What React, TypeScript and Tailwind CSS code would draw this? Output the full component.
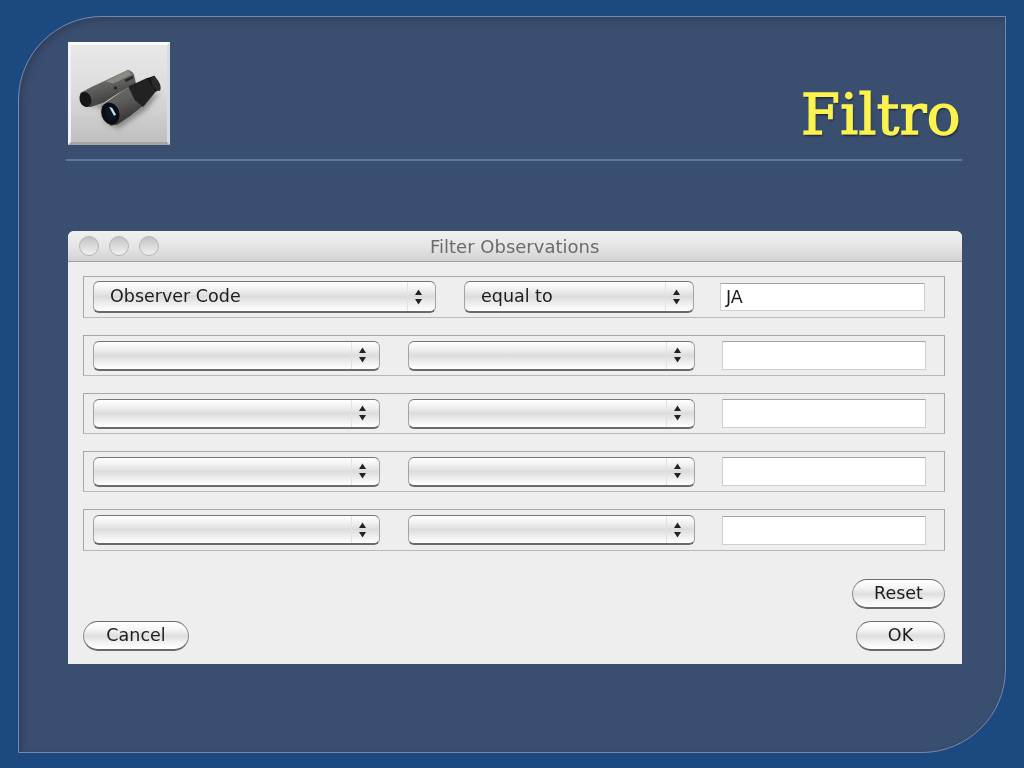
import type { ReactNode } from "react";

const uiFont = "font-['DejaVu_Sans',sans-serif]";

function Arrows() {
  return (
    <svg width="9" height="18" viewBox="0 0 9 18" className="block">
      <path d="M4.5 1.5 L8 7 L1 7 Z" fill="#222" />
      <path d="M1 11 L8 11 L4.5 16.5 Z" fill="#222" />
    </svg>
  );
}

function Select({ width, height, label }: { width: string; height: string; label?: string }) {
  return (
    <div
      className={`${width} ${height} flex shrink-0 items-stretch rounded-[6px] border border-[#a2a2a2] border-t-[#757575] border-b-2 border-b-[#6a6a6a] bg-[linear-gradient(180deg,#ffffff_0%,#f1f1f1_25%,#dcdcdc_50%,#ececec_72%,#ffffff_100%)]`}
    >
      <div className="flex min-w-0 flex-1 items-center pl-[16px] pt-[1px] text-[17.5px] leading-none text-[#1c1c1c]">{label}</div>
      <div className="flex w-[28px] items-center justify-center border-l border-[#e2e2e2] pr-[6px]">
        <Arrows />
      </div>
    </div>
  );
}

function Field({ value, width, height }: { value?: string; width: string; height: string }) {
  return (
    <div
      className={`${width} ${height} flex shrink-0 items-center border border-[#cfcfcf] border-t-[#a4a4a4] bg-white pl-[5px] pt-[1px] text-[17.5px] leading-none text-[#1c1c1c]`}
    >
      {value}
    </div>
  );
}

function Row({ height, children }: { height: string; children: ReactNode }) {
  return <div className={`${height} flex items-center border border-[#a8a8a8] border-b-[#b8b8b8] pl-[9px]`}>{children}</div>;
}

function EmptyRow({ height }: { height: string }) {
  return (
    <Row height={height}>
      <Select width="w-[287px]" height="h-[30px]" />
      <div className="w-[28px] shrink-0" />
      <Select width="w-[287px]" height="h-[30px]" />
      <div className="w-[27px] shrink-0" />
      <Field width="w-[204px]" height="h-[29px]" />
    </Row>
  );
}

function MacButton({ width, children }: { width: string; children: ReactNode }) {
  return (
    <div
      className={`${width} flex h-[30px] items-center justify-center rounded-full border border-[#8c8c8c] border-t-[#6e6e6e] border-b-2 border-b-[#6a6a6a] bg-[linear-gradient(180deg,#ffffff_0%,#f4f4f4_30%,#dedede_52%,#f2f2f2_75%,#ffffff_100%)] text-[17.5px] leading-none text-[#1c1c1c]`}
    >
      {children}
    </div>
  );
}

function Binoculars() {
  return (
    <svg viewBox="27 21 300 301" className="block h-full w-full">
      <defs>
        <linearGradient id="body" x1="0" y1="0" x2="0.4" y2="1">
          <stop offset="0" stopColor="#747470" />
          <stop offset="0.55" stopColor="#585856" />
          <stop offset="1" stopColor="#303030" />
        </linearGradient>
        <linearGradient id="rear" x1="0" y1="0" x2="0.4" y2="1">
          <stop offset="0" stopColor="#858581" />
          <stop offset="0.5" stopColor="#626260" />
          <stop offset="1" stopColor="#3a3a3a" />
        </linearGradient>
        <filter id="soft" x="-30%" y="-30%" width="160%" height="160%">
          <feGaussianBlur stdDeviation="9" />
        </filter>
        <filter id="edge">
          <feGaussianBlur stdDeviation="1.2" />
        </filter>
      </defs>
      <path d="M60 205 L120 215 L135 262 L175 282 L262 222 L305 168 L240 185 L120 200 Z" fill="#5c5c5c" opacity="0.6" filter="url(#soft)" />
      <g filter="url(#edge)">
        {/* back barrel */}
        <path d="M56 170 Q90 150 128 134 L205 97 Q218 100 224 112 L230 140 L172 172 L130 200 L88 214 Q70 214 58 195 Z" fill="url(#rear)" />
        <path d="M134 134 L205 99 L216 112 L160 140 Z" fill="#8a8a84" />
        <path d="M194 128 L220 116 L222 124 L198 136 Z" fill="#2a2a2a" />
        <ellipse cx="166" cy="154" rx="5" ry="5" fill="#242424" />
        <ellipse cx="72" cy="190" rx="18" ry="24" transform="rotate(-18 72 190)" fill="#121212" />
        {/* front barrel */}
        <path d="M122 212 Q165 176 208 152 L240 190 L252 210 Q215 242 172 268 L150 272 Z" fill="url(#body)" />
        <path d="M206 150 L266 122 L298 158 L252 214 L226 192 Z" fill="#202020" />
        <path d="M264 124 L288 116 L306 146 L294 166 Z" fill="#121212" />
        <ellipse cx="292" cy="141" rx="11" ry="25" transform="rotate(-28 292 141)" fill="#2a2a2a" />
        <ellipse cx="150" cy="234" rx="28" ry="35" transform="rotate(-18 150 234)" fill="#111111" />
        <ellipse cx="151" cy="234" rx="17" ry="24" transform="rotate(-18 151 234)" fill="#08121e" />
        <path d="M146 213 L156 217 L168 238 L161 241 Z" fill="#bfe2f0" />
      </g>
    </svg>
  );
}

export default function App() {
  return (
    <div className={`h-[768px] w-[1024px] overflow-hidden bg-[#1c4a80] pl-[18px] pt-[16px] blur-[0.35px] ${uiFont}`}>
      <div className="h-[737px] w-[988px] rounded-tl-[84px] rounded-br-[84px] border border-[#7389ad] bg-[#3a4e70] pl-[49px] pr-[43px] pt-[25px] shadow-[inset_3px_3px_6px_rgba(30,40,60,0.35)]">
        {/* header */}
        <div className="flex h-[103px] items-start justify-between">
          <div className="h-[103px] w-[102px] border-[3px] border-t-[#fbfbfb] border-l-[#f2f2f2] border-r-[#d9dbe2] border-b-[#a5a5a5] bg-[linear-gradient(180deg,#e8e8e8_0%,#dddddd_45%,#bfbfbf_100%)]">
            <Binoculars />
          </div>
          <div className="mt-[35px] pr-[1px] font-['DejaVu_Serif',serif] text-[56px] leading-[76px] tracking-[0.4px] text-[#fbf34e] [-webkit-text-stroke:1.4px_#fbf34e] [text-shadow:1px_2px_2px_#1b2438]">
            Filtro
          </div>
        </div>
        <div className="-ml-[2px] mt-[14px] h-[2px] w-[896px] bg-[#5c7aa6]" />

        {/* dialog */}
        <div className="mt-[70px] h-[433px] w-[894px] overflow-hidden rounded-t-[6px] bg-[#eeeeee]">
          <div className="flex h-[31px] items-center border-b border-[#a4a4a4] bg-[linear-gradient(180deg,#f0f0f0_0%,#e4e4e4_55%,#d2d2d2_100%)] pl-[11px]">
            <div className="flex gap-[10px]">
              <span className="h-[20px] w-[20px] rounded-full border border-[#b4b4b4] bg-[linear-gradient(180deg,#c2c2c2_0%,#dcdcdc_55%,#f0f0f0_100%)]" />
              <span className="h-[20px] w-[20px] rounded-full border border-[#b4b4b4] bg-[linear-gradient(180deg,#c2c2c2_0%,#dcdcdc_55%,#f0f0f0_100%)]" />
              <span className="h-[20px] w-[20px] rounded-full border border-[#b4b4b4] bg-[linear-gradient(180deg,#c2c2c2_0%,#dcdcdc_55%,#f0f0f0_100%)]" />
            </div>
            <div className="ml-[271px] pt-[1px] text-[18px] leading-none text-[#6b6b6b]">Filter Observations</div>
          </div>

          <div className="pl-[15px] pr-[17px] pt-[14px]">
            <div className="flex flex-col gap-[17px]">
              <Row height="h-[42px]">
                <Select width="w-[343px]" height="h-[32px]" label="Observer Code" />
                <div className="w-[28px] shrink-0" />
                <Select width="w-[230px]" height="h-[32px]" label="equal to" />
                <div className="w-[26px] shrink-0" />
                <Field width="w-[205px]" height="h-[28px]" value="JA" />
              </Row>
              <EmptyRow height="h-[41px]" />
              <EmptyRow height="h-[41px]" />
              <EmptyRow height="h-[41px]" />
              <EmptyRow height="h-[42px]" />
            </div>

            <div className="mt-[28px] flex justify-end">
              <MacButton width="w-[93px]">Reset</MacButton>
            </div>
            <div className="mt-[12px] flex justify-between">
              <MacButton width="w-[106px]">Cancel</MacButton>
              <MacButton width="w-[89px]">OK</MacButton>
            </div>
          </div>
        </div>
      </div>
    </div>
  );
}
